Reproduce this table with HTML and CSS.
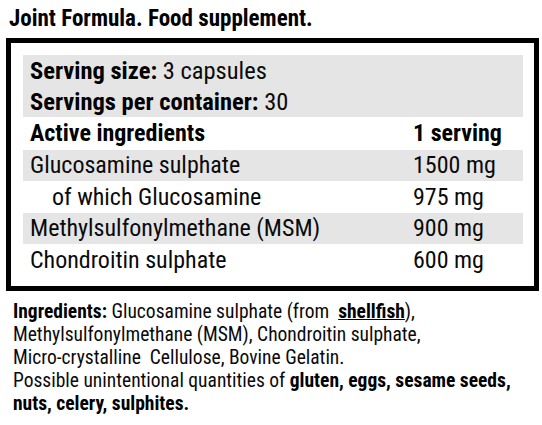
FILE: index.html
```html
<!DOCTYPE html>
<html lang="en">
<head>
  <meta charset="UTF-8" />
  <title>Joint Formula – Supplement facts</title>
  <link rel="stylesheet" href="styles.css">
</head>
<body>

  <h1 class="titulo">Joint Formula. Food supplement.</h1>

  <div class="caja">
    <div class="porcion">
      <p><b>Serving size:</b> 3 capsules</p>
      <p><b>Servings per container:</b> 30</p>
    </div>
    <div class="fila cabecera"><span>Active ingredients</span><span>1 serving</span></div>
    <div class="fila gris"><span>Glucosamine sulphate</span><span>1500 mg</span></div>
    <div class="fila"><span class="sub">of which Glucosamine</span><span>975 mg</span></div>
    <div class="fila gris"><span>Methylsulfonylmethane (MSM)</span><span>900 mg</span></div>
    <div class="fila"><span>Chondroitin sulphate</span><span>600 mg</span></div>
  </div>

  <p class="ingredientes">
    <b>Ingredients:</b> Glucosamine sulphate (from&nbsp; <b class="alergeno">shellfish</b>),<br>
    Methylsulfonylmethane (MSM), Chondroitin sulphate,<br>
    Micro-crystalline&nbsp; Cellulose, Bovine Gelatin.<br>
    Possible unintentional quantities of <b>gluten, eggs, sesame seeds,<br>
    nuts, celery, sulphites.</b>
  </p>

</body>
</html>
```

FILE: styles.css
```css
/* ===== Base ===== */
* { margin:0; padding:0; box-sizing:border-box; }
body {
  font-family: "Roboto Condensed", "Liberation Sans Narrow", "DejaVu Sans Condensed", Roboto, sans-serif;
  color:#0a0a0a; background:#fff;
}

.titulo {
  font-size:23px; font-weight:bold; color:#000;
  line-height:28px; padding:5px 0 0 9px;
}

/* ===== Tabla ===== */
.caja {
  margin:5px 3px 0 6px; border:5px solid #000;
  padding:12px 11px 10px 12px;
}
.porcion { background:#e5e5e5; padding-left:7px; }
.porcion p { font-size:24.5px; line-height:31px; }
.porcion b { color:#000; }

.fila {
  display:grid; grid-template-columns:383px 1fr;
  padding-left:7px; font-size:24px; line-height:32px;
}
.fila.gris { background:#e5e5e5; line-height:31px; }
.fila.cabecera { font-weight:bold; color:#000; line-height:33px; }
.sub { padding-left:22px; }

/* ===== Ingredientes ===== */
.ingredientes {
  font-size:19.5px; line-height:23px;
  padding:9px 0 0 13px;
}
.ingredientes b { color:#000; }
.alergeno { text-decoration:underline; }
```
